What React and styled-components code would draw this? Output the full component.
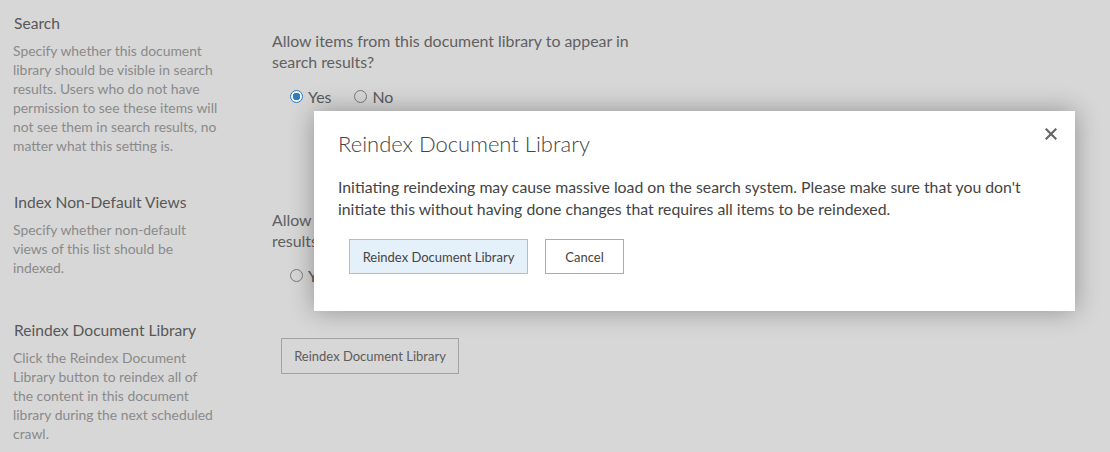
import styled, { createGlobalStyle } from "styled-components";

const GlobalStyle = createGlobalStyle`
    html, body {
        margin: 0;
        padding: 0;
        background: #d7d7d7;
    }
    body {
        font-family: Lato, "Open Sans", "Liberation Sans", sans-serif;
        width: 1110px;
        height: 452px;
        overflow: hidden;
    }
`;

// Secciones de la página de configuración
const sections = [
    {
        title: "Search",
        desc: [
            "Specify whether this document",
            "library should be visible in search",
            "results. Users who do not have",
            "permission to see these items will",
            "not see them in search results, no",
            "matter what this setting is.",
        ],
        question: ["Allow items from this document library to appear in", "search results?"],
        checked: "yes",
        height: 179,
    },
    {
        title: "Index Non-Default Views",
        desc: ["Specify whether non-default", "views of this list should be", "indexed."],
        question: ["Allow non-default views to appear in search", "results?"],
        checked: null,
        height: 128,
    },
    {
        title: "Reindex Document Library",
        desc: [
            "Click the Reindex Document",
            "Library button to reindex all of",
            "the content in this document",
            "library during the next scheduled",
            "crawl.",
        ],
        button: "Reindex Document Library",
    },
];

const App = () => {
    return (
        <>
            <GlobalStyle />
            <Page>
                {sections.map((s, i) => (
                    <Section key={i} $height={s.height}>
                        <LeftCol>
                            <SectionTitle>{s.title}</SectionTitle>
                            <Description>
                                {s.desc.map((line, j) => (
                                    <div key={j}>{line}</div>
                                ))}
                            </Description>
                        </LeftCol>
                        <RightCol $button={!!s.button}>
                            {s.question && (
                                <>
                                    <Question>
                                        {s.question.map((line, j) => (
                                            <div key={j}>{line}</div>
                                        ))}
                                    </Question>
                                    <RadioRow>
                                        <RadioOption>
                                            <Radio $checked={s.checked === "yes"} />
                                            Yes
                                        </RadioOption>
                                        <RadioOption>
                                            <Radio $checked={s.checked === "no"} />
                                            No
                                        </RadioOption>
                                    </RadioRow>
                                </>
                            )}
                            {s.button && <PageButton>{s.button}</PageButton>}
                        </RightCol>
                    </Section>
                ))}

                <Dialog>
                    <CloseButton aria-label="Close">
                        <svg width="12" height="12" viewBox="0 0 12 12">
                            <path d="M1.5 1.5 L10.5 10.5 M10.5 1.5 L1.5 10.5" stroke="#666" strokeWidth="2.2" strokeLinecap="square" />
                        </svg>
                    </CloseButton>
                    <DialogTitle>Reindex Document Library</DialogTitle>
                    <DialogBody>
                        <div>Initiating reindexing may cause massive load on the search system. Please make sure that you don't</div>
                        <div>initiate this without having done changes that requires all items to be reindexed.</div>
                    </DialogBody>
                    <DialogActions>
                        <DialogButton $primary>Reindex Document Library</DialogButton>
                        <DialogButton>Cancel</DialogButton>
                    </DialogActions>
                </Dialog>
            </Page>
        </>
    );
};

// Estilos
const Page = styled.div`
    position: relative;
    padding: 13px 0 0 13px;
    height: 452px;
    box-sizing: border-box;
`;

const Section = styled.div`
    display: grid;
    grid-template-columns: 259px 1fr;
    align-items: start;
    min-height: ${(p) => (p.$height ? `${p.$height}px` : "auto")};
`;

const LeftCol = styled.div`
    display: flex;
    flex-direction: column;
`;

const SectionTitle = styled.div`
    font-size: 15.6px;
    line-height: 20px;
    color: #575757;
    margin-left: 1px;
    white-space: nowrap;
`;

const Description = styled.div`
    margin-top: 8px;
    font-size: 13.9px;
    line-height: 19px;
    color: #8a8a8a;
    white-space: nowrap;
`;

const RightCol = styled.div`
    padding-top: ${(p) => (p.$button ? "18px" : "17px")};
`;

const Question = styled.div`
    font-size: 15.9px;
    line-height: 21px;
    color: #606060;
    white-space: nowrap;
`;

const RadioRow = styled.div`
    display: flex;
    gap: 23px;
    margin-top: 14px;
    padding-left: 18px;
    height: 20px;
    align-items: center;
`;

const RadioOption = styled.label`
    display: flex;
    align-items: center;
    gap: 5px;
    font-size: 15.9px;
    color: #5a5a5a;
`;

const Radio = styled.span`
    width: 13px;
    height: 13px;
    box-sizing: border-box;
    border-radius: 50%;
    border: 1px solid ${(p) => (p.$checked ? "#2f7cc0" : "#7a7a7a")};
    background: ${(p) => (p.$checked ? "radial-gradient(circle, #2f7cc0 0 3.5px, #f4f4f4 4px)" : "transparent")};
`;

const PageButton = styled.button`
    margin-left: 9px;
    width: 178px;
    height: 36px;
    border: 1px solid #a3a3a3;
    background: transparent;
    color: #5c5c5c;
    font-family: inherit;
    font-size: 13px;
    padding: 0;
`;

const Dialog = styled.div`
    position: absolute;
    left: 314px;
    top: 111px;
    width: 761px;
    height: 200px;
    box-sizing: border-box;
    background: #fff;
    box-shadow: 0 0 24px rgba(0, 0, 0, 0.32);
    padding: 18px 24px 0 24px;
`;

const CloseButton = styled.span`
    position: absolute;
    right: 18px;
    top: 17px;
    width: 12px;
    height: 12px;
    display: flex;
`;

const DialogTitle = styled.div`
    font-size: 22px;
    font-weight: 300;
    line-height: 30px;
    color: #444;
`;

const DialogBody = styled.div`
    margin-top: 17px;
    font-size: 15.8px;
    line-height: 22px;
    color: #444;
    white-space: nowrap;
`;

const DialogActions = styled.div`
    display: flex;
    gap: 17px;
    margin-top: 19px;
    margin-left: 11px;
`;

const DialogButton = styled.button`
    height: 35px;
    padding: 0 ${(p) => (p.$primary ? "12px" : "19px")};
    min-width: ${(p) => (p.$primary ? "179px" : "79px")};
    border: 1px solid ${(p) => (p.$primary ? "#98c4e6" : "#ababab")};
    background: ${(p) => (p.$primary ? "#e5f1fa" : "#fff")};
    color: #444;
    font-family: inherit;
    font-size: 13px;
`;

export default App;
